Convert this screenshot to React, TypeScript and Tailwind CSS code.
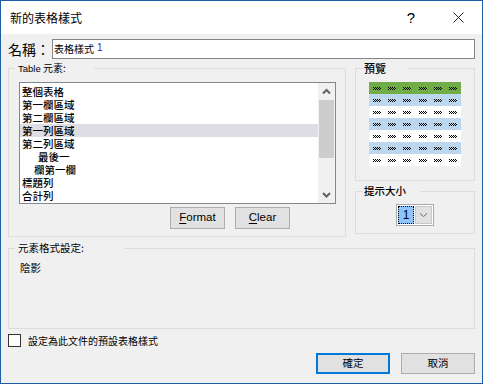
import React from 'react';

const CJK = "font-['Noto_Sans_CJK_TC','Noto_Sans_CJK_SC',sans-serif]";
const LAT = "font-['Liberation_Sans','Noto_Sans_CJK_TC',sans-serif]";

const Checker: React.FC = () => (
    <svg width="8" height="3" viewBox="0 0 8 3" shapeRendering="crispEdges">
        {[0, 2, 4, 6].map((x) => (
            <rect key={'a' + x} x={x} y={0} width={1} height={1} fill="#000" />
        ))}
        {[1, 3, 5, 7].map((x) => (
            <rect key={'b' + x} x={x} y={1} width={1} height={1} fill="#000" />
        ))}
        {[0, 2, 4, 6].map((x) => (
            <rect key={'c' + x} x={x} y={2} width={1} height={1} fill="#000" />
        ))}
    </svg>
);

type GroupProps = {
    label: React.ReactNode;
    labelWidth: number;
    className: string;
    children?: React.ReactNode;
};

// caja de grupo estilo Win32 con la etiqueta sobre el borde
const GroupBox: React.FC<GroupProps> = ({ label, labelWidth, className, children }) => (
    <div className={`relative border border-[#dcdcdc] ${className}`}>
        <div
            className="absolute -top-[8px] left-[6px] h-[14px] bg-[#f0f0f0] pl-[2px] flex items-center whitespace-nowrap"
            style={{ width: labelWidth }}
        >
            {label}
        </div>
        {children}
    </div>
);

const items = [
    { text: '整個表格', indent: 0 },
    { text: '第一欄區域', indent: 0 },
    { text: '第二欄區域', indent: 0 },
    { text: '第一列區域', indent: 0, selected: true },
    { text: '第二列區域', indent: 0 },
    { text: '最後一', indent: 16 },
    { text: '欄第一欄', indent: 12 },
    { text: '標題列', indent: 0 },
    { text: '合計列', indent: 0 },
];

const rowColors = ['bg-[#70ad47]', 'bg-[#bdd7ee]', 'bg-white', 'bg-[#bdd7ee]', 'bg-white', 'bg-[#bdd7ee]', 'bg-white'];

export default function App() {
    return (
        <div className={`w-[483px] h-[384px] border border-[#1b5ea6] bg-[#f0f0f0] flex flex-col text-black ${CJK}`}>
            {/* Barra de título */}
            <div className="h-[33px] bg-white flex items-center pl-[9px] pr-[18px]">
                <span className="text-[12px] leading-none">新的表格樣式</span>
                <span className={`ml-auto mr-[38px] text-[15px] leading-none ${LAT}`}>?</span>
                <svg width="11" height="11" viewBox="0 0 11 11">
                    <path d="M0.5 0.5 L10.5 10.5 M10.5 0.5 L0.5 10.5" stroke="#222" strokeWidth="1" />
                </svg>
            </div>

            <div className="flex-1 px-[7px]">
                {/* Nombre */}
                <div className="mt-[5px] flex items-center h-[20px]">
                    <span className="w-[44px] shrink-0 whitespace-nowrap text-[14px] leading-none">名稱：</span>
                    <div className="w-[423px] h-[20px] border border-[#868686] bg-white flex items-center pl-[1px] text-[10px] leading-none">
                        表格樣式 <span className={`ml-[3px] text-[10px] text-[#3a2a8a] -mt-[3px] ${LAT}`}>1</span>
                    </div>
                </div>

                <div className="mt-[9px] flex">
                    {/* Elementos de tabla */}
                    <GroupBox
                        labelWidth={79}
                        className="w-[338px] h-[169px]"
                        label={
                            <span className="text-[10px] leading-none pl-[1px]">
                                <span className={`text-[9.5px] ${LAT}`}>Table</span> 元素:
                            </span>
                        }
                    >
                        <div className="ml-[10px] mt-[13px] w-[317px] h-[122px] border border-[#828790] bg-white flex">
                            <div className="flex-1 pt-[2px]">
                                {items.map((it) => (
                                    <div
                                        key={it.text}
                                        className={`h-[13px] flex items-center text-[10.5px] leading-[13px] font-medium ${it.selected ? 'bg-[#dedde3]' : ''}`}
                                        style={{ paddingLeft: 2 + it.indent }}
                                    >
                                        {it.text}
                                    </div>
                                ))}
                            </div>
                            <div className="w-[17px] bg-[#f0f0f0] flex flex-col items-center">
                                <svg width="17" height="17" viewBox="0 0 17 17">
                                    <path d="M5 10.5 L8.5 7 L12 10.5" stroke="#606060" strokeWidth="2" fill="none" />
                                </svg>
                                <div className="w-[15px] h-[58px] bg-[#cdcdcd]" />
                                <div className="flex-1" />
                                <svg width="17" height="17" viewBox="0 0 17 17">
                                    <path d="M5 7 L8.5 10.5 L12 7" stroke="#606060" strokeWidth="2" fill="none" />
                                </svg>
                            </div>
                        </div>
                        <div className={`mt-[3px] ml-[161px] flex gap-[10px] text-[11.5px] ${LAT}`}>
                            <button className="w-[55px] h-[22px] border border-[#adadad] bg-[#e1e1e1] leading-none">
                                <span className="underline underline-offset-2">F</span>ormat
                            </button>
                            <button className="w-[55px] h-[22px] border border-[#adadad] bg-[#e1e1e1] leading-none">
                                <span className="underline underline-offset-2">C</span>lear
                            </button>
                        </div>
                    </GroupBox>

                    <div className="ml-[9px] w-[120px] flex flex-col">
                        {/* Vista previa */}
                        <GroupBox
                            labelWidth={45}
                            className="h-[113px]"
                            label={<span className="text-[11px] leading-none font-medium">預覽</span>}
                        >
                            <div className="ml-[13px] mt-[13px] w-[92px]">
                                {rowColors.map((c, i) => (
                                    <div key={i} className={`h-[12px] grid grid-cols-6 ${c}`}>
                                        {[0, 1, 2, 3, 4, 5].map((j) => (
                                            <div key={j} className="flex items-center justify-center">
                                                <Checker />
                                            </div>
                                        ))}
                                    </div>
                                ))}
                            </div>
                        </GroupBox>

                        {/* Tamaño de sugerencia */}
                        <GroupBox
                            labelWidth={58}
                            className="mt-[10px] h-[43px]"
                            label={<span className="text-[10.5px] leading-none font-medium">提示大小</span>}
                        >
                            <div className="ml-[40px] mt-[12px] w-[38px] h-[22px] border border-[#a9a9a9] bg-white flex p-[1px]">
                                <div className="w-[16px] h-full bg-[#8ec5fd] border border-dotted border-black flex items-center justify-center">
                                    <span className={`text-[12px] leading-none ${LAT}`}>1</span>
                                </div>
                                <div className="flex-1 ml-[1px] bg-[#e1e1e1] border border-[#c8c8c8] flex items-center justify-center">
                                    <svg width="9" height="6" viewBox="0 0 9 6">
                                        <path d="M1 1.5 L4.5 4.5 L8 1.5" stroke="#6d6d6d" strokeWidth="1" fill="none" />
                                    </svg>
                                </div>
                            </div>
                        </GroupBox>
                    </div>
                </div>

                {/* Formato del elemento */}
                <GroupBox
                    labelWidth={109}
                    className="mt-[11px] w-[467px] h-[81px]"
                    label={<span className="text-[10.5px] leading-none pl-[1px]">元素格式設定:</span>}
                >
                    <div className="ml-[11px] mt-[14px] text-[10.5px] leading-none">陰影</div>
                </GroupBox>

                <div className="mt-[5px] flex items-center">
                    <div className="w-[13px] h-[13px] border border-[#333] bg-white" />
                    <span className="ml-[7px] text-[10px] leading-none">設定為此文件的預設表格樣式</span>
                </div>

                <div className="mt-[6px] flex justify-end gap-[11px] text-[10.5px]">
                    <button className="w-[74px] h-[21px] border-2 border-[#0078d7] bg-[#e1e1e1] leading-none">確定</button>
                    <button className="w-[74px] h-[21px] border border-[#adadad] bg-[#e1e1e1] leading-none">取消</button>
                </div>
            </div>
        </div>
    );
}
